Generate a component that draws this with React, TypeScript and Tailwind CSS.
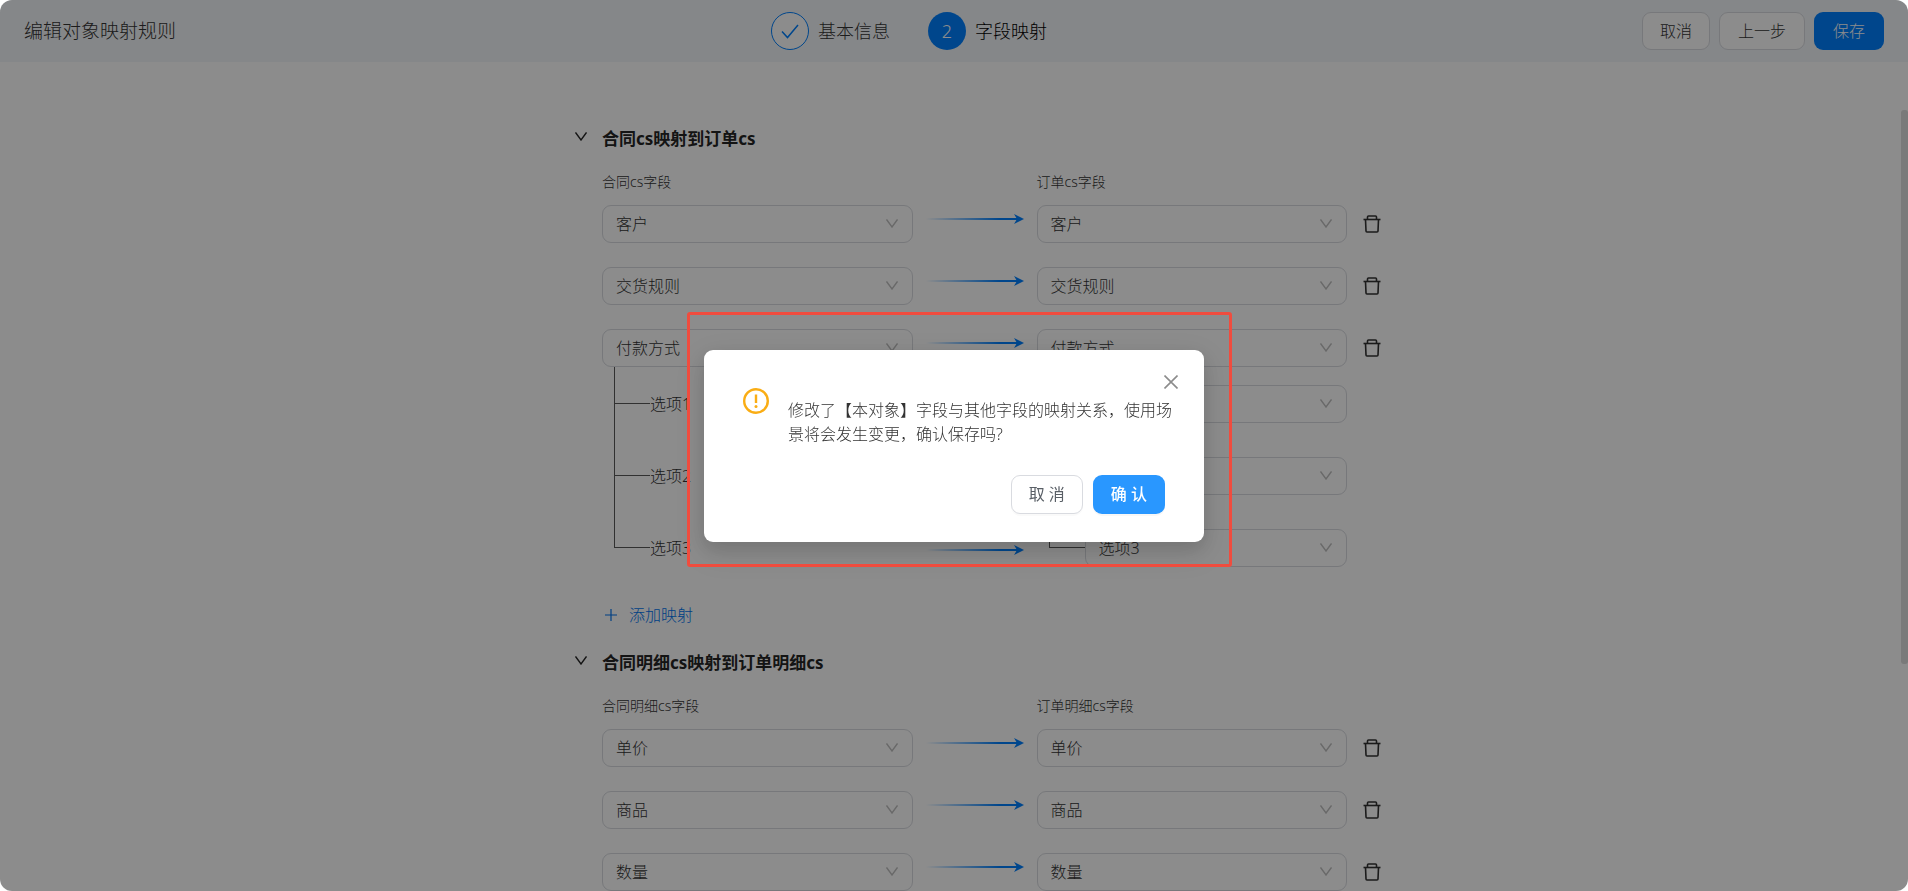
import { clsx } from 'clsx';

type Mapping = {
  id: string;
  label: string;
  options?: string[];
};

type Section = {
  id: string;
  title: string;
  source: string;
  target: string;
  rows: Mapping[];
  canAdd?: boolean;
};

const sections: Section[] = [
  {
    id: 'contract',
    title: '合同cs映射到订单cs',
    source: '合同cs字段',
    target: '订单cs字段',
    rows: [
      { id: 'customer', label: '客户' },
      { id: 'delivery', label: '交货规则' },
      { id: 'payment', label: '付款方式', options: ['选项1', '选项2', '选项3'] },
    ],
    canAdd: true,
  },
  {
    id: 'detail',
    title: '合同明细cs映射到订单明细cs',
    source: '合同明细cs字段',
    target: '订单明细cs字段',
    rows: [
      { id: 'price', label: '单价' },
      { id: 'product', label: '商品' },
      { id: 'amount', label: '数量' },
    ],
  },
];

const rowGrid = 'grid grid-cols-[1fr_124px_1fr_34px]';

function ChevronDown({ className }: { className?: string }) {
  return (
    <svg viewBox="0 0 12 9" className={clsx('h-[9px] w-3', className)} fill="none" stroke="currentColor">
      <path d="M0.5 0.5 L6 8 L11.5 0.5" strokeWidth="1.4" />
    </svg>
  );
}

function Arrow({ id }: { id: string }) {
  return (
    <svg viewBox="0 0 98 12" className="h-3 w-[98px]" fill="none">
      <defs>
        <linearGradient id={id} x1="0" y1="0" x2="1" y2="0">
          <stop offset="0" stopColor="#0080ff" stopOpacity="0" />
          <stop offset="0.8" stopColor="#0080ff" />
        </linearGradient>
      </defs>
      <rect x="0" y="5" width="92" height="2" fill={`url(#${id})`} />
      <path d="M88 1 L98 6 L88 11 L91 6 Z" fill="#0080ff" />
    </svg>
  );
}

function TrashIcon() {
  return (
    <svg viewBox="0 0 18 18" className="size-[18px]" fill="none" stroke="currentColor" strokeWidth="1.6">
      <path d="M0.5 4.5 H17.5" />
      <path d="M4.5 4.5 V2 Q4.5 1 5.5 1 H12.5 Q13.5 1 13.5 2 V4.5" />
      <path d="M2.5 4.5 L3 16 Q3 17 4 17 H14 Q15 17 15 16 L15.5 4.5" />
    </svg>
  );
}

function FieldSelect({ value, label }: { value: string; label: string }) {
  return (
    <div className="relative grow">
      <select
        aria-label={label}
        className="block h-[38px] w-full appearance-none rounded-[9px] border border-[#d9dbe0] bg-white pl-[13px] text-base font-light text-[#333]"
      >
        <option>{value}</option>
      </select>
      <ChevronDown className="pointer-events-none absolute top-3.5 right-[15px] text-[#bfbfbf]" />
    </div>
  );
}

function Connector({ last }: { last: boolean }) {
  return (
    <div className="ml-3 flex w-9 flex-col">
      <div className="grow border-b border-l border-[#595959]" />
      <div className={clsx('h-[19px]', !last && 'border-l border-[#595959]')} />
    </div>
  );
}

function OptionRow({ id, option, first, last }: { id: string; option: string; first: boolean; last: boolean }) {
  return (
    <div className={clsx(rowGrid, first ? 'h-14' : 'h-[72px]')}>
      <div className="flex">
        <Connector last={last} />
        <span className="flex h-[38px] items-center self-end">{option}</span>
      </div>
      <div className="flex h-[38px] items-center justify-center self-end pt-1">
        <Arrow id={id} />
      </div>
      <div className="flex">
        <Connector last={last} />
        <div className="flex grow items-end">
          <FieldSelect value={option} label={`目标${option}`} />
        </div>
      </div>
    </div>
  );
}

function MappingRow({ id, row }: { id: string; row: Mapping }) {
  return (
    <div>
      <div className={rowGrid}>
        <FieldSelect value={row.label} label={`源字段 ${row.label}`} />
        <div className="flex items-center justify-center pb-2.5">
          <Arrow id={id} />
        </div>
        <FieldSelect value={row.label} label={`目标字段 ${row.label}`} />
        <button type="button" aria-label={`删除${row.label}`} className="flex items-center justify-end">
          <TrashIcon />
        </button>
      </div>
      {row.options?.map((option, i) => (
        <OptionRow
          key={option}
          id={`${id}-${i}`}
          option={option}
          first={i === 0}
          last={i === row.options!.length - 1}
        />
      ))}
    </div>
  );
}

function MappingSection({ section }: { section: Section }) {
  return (
    <section className="flex gap-[15px]">
      <button type="button" aria-label="收起" className="flex h-[18px] items-center self-start text-[#262626]">
        <ChevronDown />
      </button>
      <div className="grow">
        <h2 className="mb-5 text-[17px] leading-6 font-bold text-[#262626]">{section.title}</h2>
        <div className={clsx(rowGrid, 'mb-3 text-sm leading-[22px]')}>
          <span>{section.source}</span>
          <span className="col-start-3">{section.target}</span>
        </div>
        <div className="flex flex-col gap-6">
          {section.rows.map((row) => (
            <MappingRow key={row.id} id={`${section.id}-${row.id}`} row={row} />
          ))}
        </div>
        {section.canAdd && (
          <button type="button" className="mt-9 mb-6 ml-[3px] flex h-6 items-center gap-3 text-[#0074f0]">
            <svg viewBox="0 0 12 12" className="size-3" stroke="currentColor" strokeWidth="1.2">
              <path d="M6 0 V12 M0 6 H12" />
            </svg>
            添加映射
          </button>
        )}
      </div>
    </section>
  );
}

function Header() {
  return (
    <header className="flex h-[62px] shrink-0 items-center justify-between bg-[#f3f6f9] px-6">
      <h1 className="text-[19px]">编辑对象映射规则</h1>
      <ol className="flex gap-[38px] text-lg">
        <li className="flex items-center gap-[9px]">
          <span className="flex size-[38px] items-center justify-center rounded-full border border-[#0080ff] bg-white text-[#0080ff]">
            <svg viewBox="0 0 18 15" className="h-[15px] w-[18px]" fill="none" stroke="currentColor" strokeWidth="1.5">
              <path d="M1 7.5 L6.5 13.5 L17 1" />
            </svg>
          </span>
          基本信息
        </li>
        <li className="flex items-center gap-[9px] text-black">
          <span className="flex size-[38px] items-center justify-center rounded-full bg-[#0080ff] text-white">2</span>
          字段映射
        </li>
      </ol>
      <div className="flex gap-[9px]">
        <button type="button" className="h-[38px] rounded-[9px] border border-[#d9dbe0] bg-white px-[17px]">
          取消
        </button>
        <button type="button" className="h-[38px] rounded-[9px] border border-[#d9dbe0] bg-white px-[18px]">
          上一步
        </button>
        <button type="button" className="h-[38px] rounded-[9px] bg-[#0080ff] px-[19px] text-white">
          保存
        </button>
      </div>
    </header>
  );
}

function ConfirmDialog() {
  return (
    <div className="fixed inset-0 flex items-center justify-center rounded-xl bg-black/45">
      <div
        role="dialog"
        aria-modal="true"
        className="relative w-[500px] rounded-[9px] bg-white pt-12 pr-[39px] pb-7 pl-[39px] shadow-[0_7px_18px_rgba(0,0,0,0.12),0_10px_31px_9px_rgba(0,0,0,0.07)]"
      >
        <button type="button" aria-label="关闭" className="absolute top-[25px] right-[26px] text-[#8c8c8c]">
          <svg viewBox="0 0 14 14" className="size-3.5" stroke="currentColor" strokeWidth="1.6">
            <path d="M0.5 0.5 L13.5 13.5 M13.5 0.5 L0.5 13.5" />
          </svg>
        </button>
        <div className="-mr-2 flex items-start gap-[19px]">
          <svg viewBox="0 0 26 26" className="-mt-2.5 size-[26px] shrink-0" fill="none" stroke="#faad14" strokeWidth="2.4">
            <circle cx="13" cy="13" r="11.8" />
            <path d="M13 6.5 V15" />
            <circle cx="13" cy="18.5" r="1.5" fill="#faad14" stroke="none" />
          </svg>
          <p className="leading-6">修改了【本对象】字段与其他字段的映射关系，使用场景将会发生变更，确认保存吗?</p>
        </div>
        <div className="mt-[29px] flex justify-end gap-2.5">
          <button
            type="button"
            className="h-[39px] rounded-[9px] border border-[#d9dbe0] bg-white px-[17px] font-normal text-[#595f66] shadow-[0_2px_0_rgba(0,0,0,0.02)]"
          >
            取 消
          </button>
          <button
            type="button"
            className="h-[39px] rounded-[9px] bg-[#2997ff] px-[18px] font-medium text-white shadow-[0_2px_0_rgba(0,0,0,0.03)]"
          >
            确 认
          </button>
        </div>
        {/* highlight frame around the dialog */}
        <div className="pointer-events-none absolute -top-[38px] -right-7 -bottom-[25px] -left-[17px] rounded-[3px] border-3 border-[#f04c3e]" />
      </div>
    </div>
  );
}

export default function App() {
  return (
    <div className="flex h-screen flex-col overflow-hidden rounded-xl bg-white font-['Noto_Sans','Noto_Sans_CJK_SC',sans-serif] text-base font-light text-[#333]">
      <Header />
      <main className="relative min-h-0 grow overflow-hidden pt-[65px]">
        <div className="mx-auto flex max-w-[854px] flex-col pl-12">
          {sections.map((section) => (
            <MappingSection key={section.id} section={section} />
          ))}
        </div>
        <div className="absolute top-12 right-0 h-[554px] w-[7px] rounded-[3px] bg-[#dedede]" />
      </main>
      <ConfirmDialog />
    </div>
  );
}
